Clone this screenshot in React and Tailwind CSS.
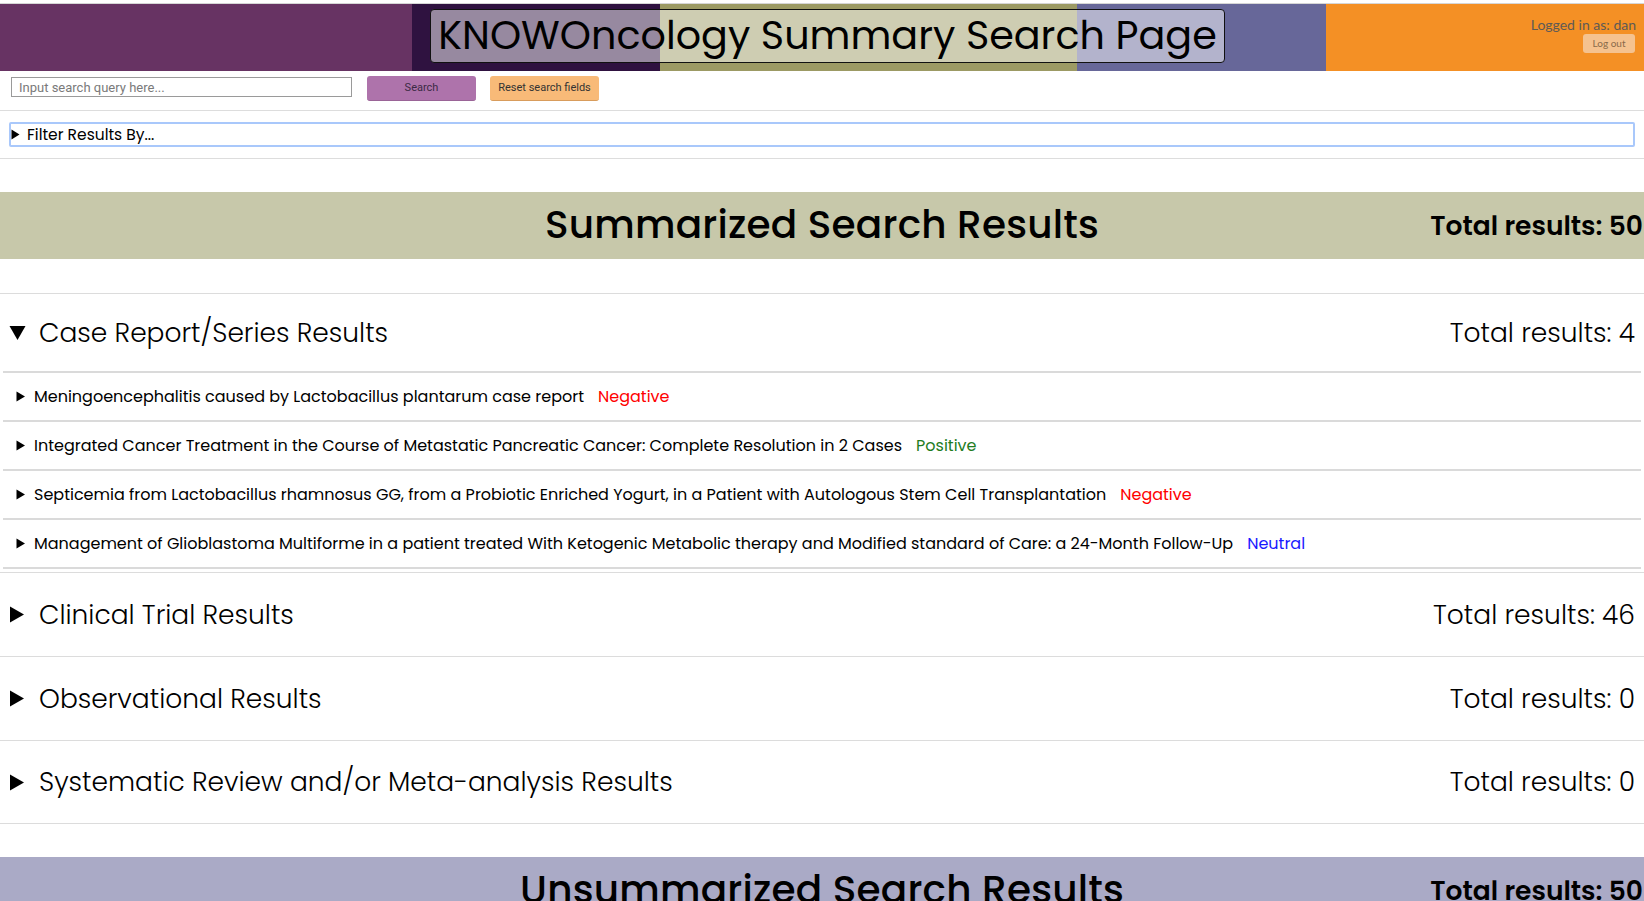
import React from "react";

const caseItems = [
  { title: "Meningoencephalitis caused by Lactobacillus plantarum case report", label: "Negative" },
  { title: "Integrated Cancer Treatment in the Course of Metastatic Pancreatic Cancer: Complete Resolution in 2 Cases", label: "Positive" },
  { title: "Septicemia from Lactobacillus rhamnosus GG, from a Probiotic Enriched Yogurt, in a Patient with Autologous Stem Cell Transplantation", label: "Negative" },
  { title: "Management of Glioblastoma Multiforme in a patient treated With Ketogenic Metabolic therapy and Modified standard of Care: a 24-Month Follow-Up", label: "Neutral" },
];

const labelColor = {
  Negative: "text-[#ff0000]",
  Positive: "text-[#1f7d1f]",
  Neutral: "text-[#1a1aff]",
};

function Arrow({ open, size = 17 }) {
  return (
    <svg width={size} height={size} viewBox="0 0 17 17" className="shrink-0">
      {open ? <polygon points="0.5,2 16.5,2 8.5,16" fill="#000" /> : <polygon points="1,0.5 15,8.5 1,16.5" fill="#000" />}
    </svg>
  );
}

function SectionHeader({ title, total, open }) {
  return (
    <div className="flex items-center justify-between pl-[9px] pr-[9px] h-full">
      <div className="flex items-center gap-[13px]">
        <Arrow open={open} />
        <span className="text-[26.5px] font-light">{title}</span>
      </div>
      <span className="text-[26.5px] font-light">Total results: {total}</span>
    </div>
  );
}

function ResultRow({ title, label }) {
  return (
    <div className="h-[49px] border-t-2 border-[#dadada] flex items-center pl-[13px]">
      <svg width="10" height="11" viewBox="0 0 10 11" className="shrink-0">
        <polygon points="0.5,0.5 9,5.5 0.5,10.5" fill="#000" />
      </svg>
      <span className="ml-[8px] text-[16px]">{title}</span>
      <span className={"ml-[14px] text-[16px] " + labelColor[label]}>{label}</span>
    </div>
  );
}

function Banner({ title, bg }) {
  return (
    <div className={"h-[67px] grid grid-cols-[1fr_auto_1fr] items-center " + bg}>
      <div />
      <h2 className="text-[39px] font-medium tracking-[0.2px]">{title}</h2>
      <div className="text-right text-[26.5px] font-semibold pr-[1px]">Total results: 50</div>
    </div>
  );
}

export default function App() {
  return (
    <div className="min-h-screen bg-white text-black font-['Poppins','Open_Sans',sans-serif]">
      <div className="h-[4px] border-b border-[#d6d6d6]" />

      {/* colour bar header */}
      <div className="relative h-[67px] grid grid-cols-[412px_248px_417px_249px_1fr]">
        <div className="bg-[#673363]" />
        <div className="bg-[#2f1240]" />
        <div className="bg-[#9c9a64]" />
        <div className="bg-[#676799]" />
        <div className="bg-[#f49025] flex flex-col items-end pr-[8px] pt-[12px] font-['Lato',sans-serif]">
          <span className="text-[14px] leading-[17px] text-[#5e5a55]">Logged in as: dan</span>
          <button className="mt-[1px] mr-[1px] w-[52px] h-[19px] rounded-[3px] bg-[#f5c28f] text-[10px] text-[#8a6a4a]">
            Log out
          </button>
        </div>
        <div className="absolute left-[430px] top-[5px] w-[795px] h-[54px] border border-[#111] rounded-[4px] bg-white/50 flex items-center justify-center">
          <h1 className="text-[39.7px] leading-none text-black">KNOWOncology Summary Search Page</h1>
        </div>
      </div>

      {/* search row */}
      <div className="h-[40px] border-b border-[#dddddd] flex items-start pt-[5px] pl-[11px] font-['Roboto',sans-serif]">
        <input
          className="mt-[1px] w-[341px] h-[20px] border border-[#9a9a9a] px-[7px] text-[13px] outline-none placeholder:text-[#7a7a7a]"
          placeholder="Input search query here..."
        />
        <button className="ml-[15px] w-[109px] h-[25px] rounded-[3px] bg-[#ae73ab] border-b border-[#9a6497] text-[11px] text-[#3b2a45]">
          Search
        </button>
        <button className="ml-[14px] w-[109px] h-[25px] rounded-[3px] bg-[#f8ba78] border-b border-[#d89c5c] text-[11px] text-[#333]">
          Reset search fields
        </button>
      </div>

      {/* filter */}
      <div className="py-[11px] px-[9px] border-b border-[#dddddd]">
        <div className="h-[25px] border-2 border-[#a9c8fb] rounded-[2px] flex items-center">
          <svg width="9" height="11" viewBox="0 0 9 11">
            <polygon points="0.5,0.5 8.5,5.5 0.5,10.5" fill="#000" />
          </svg>
          <span className="ml-[7px] text-[15.5px]">Filter Results By...</span>
        </div>
      </div>

      <div className="mt-[33px]">
        <Banner title="Summarized Search Results" bg="bg-[#c7c8aa]" />
      </div>

      <div className="mt-[34px] border-t border-[#dcdcdc]">
        <div className="h-[77px]">
          <SectionHeader title="Case Report/Series Results" total={4} open />
        </div>
        <div className="mx-[3px] border-b-2 border-[#dadada]">
          {caseItems.map((it) => (
            <ResultRow key={it.title} {...it} />
          ))}
        </div>
        <div className="h-[3px]" />
      </div>

      <div className="border-t border-[#dcdcdc] h-[84px]">
        <SectionHeader title="Clinical Trial Results" total={46} />
      </div>
      <div className="border-t border-[#dcdcdc] h-[84px]">
        <SectionHeader title="Observational Results" total={0} />
      </div>
      <div className="border-y border-[#dcdcdc] h-[84px]">
        <SectionHeader title="Systematic Review and/or Meta-analysis Results" total={0} />
      </div>

      <div className="mt-[33px]">
        <Banner title="Unsummarized Search Results" bg="bg-[#aaaac6]" />
      </div>
      <div className="h-[200px]" />
    </div>
  );
}
